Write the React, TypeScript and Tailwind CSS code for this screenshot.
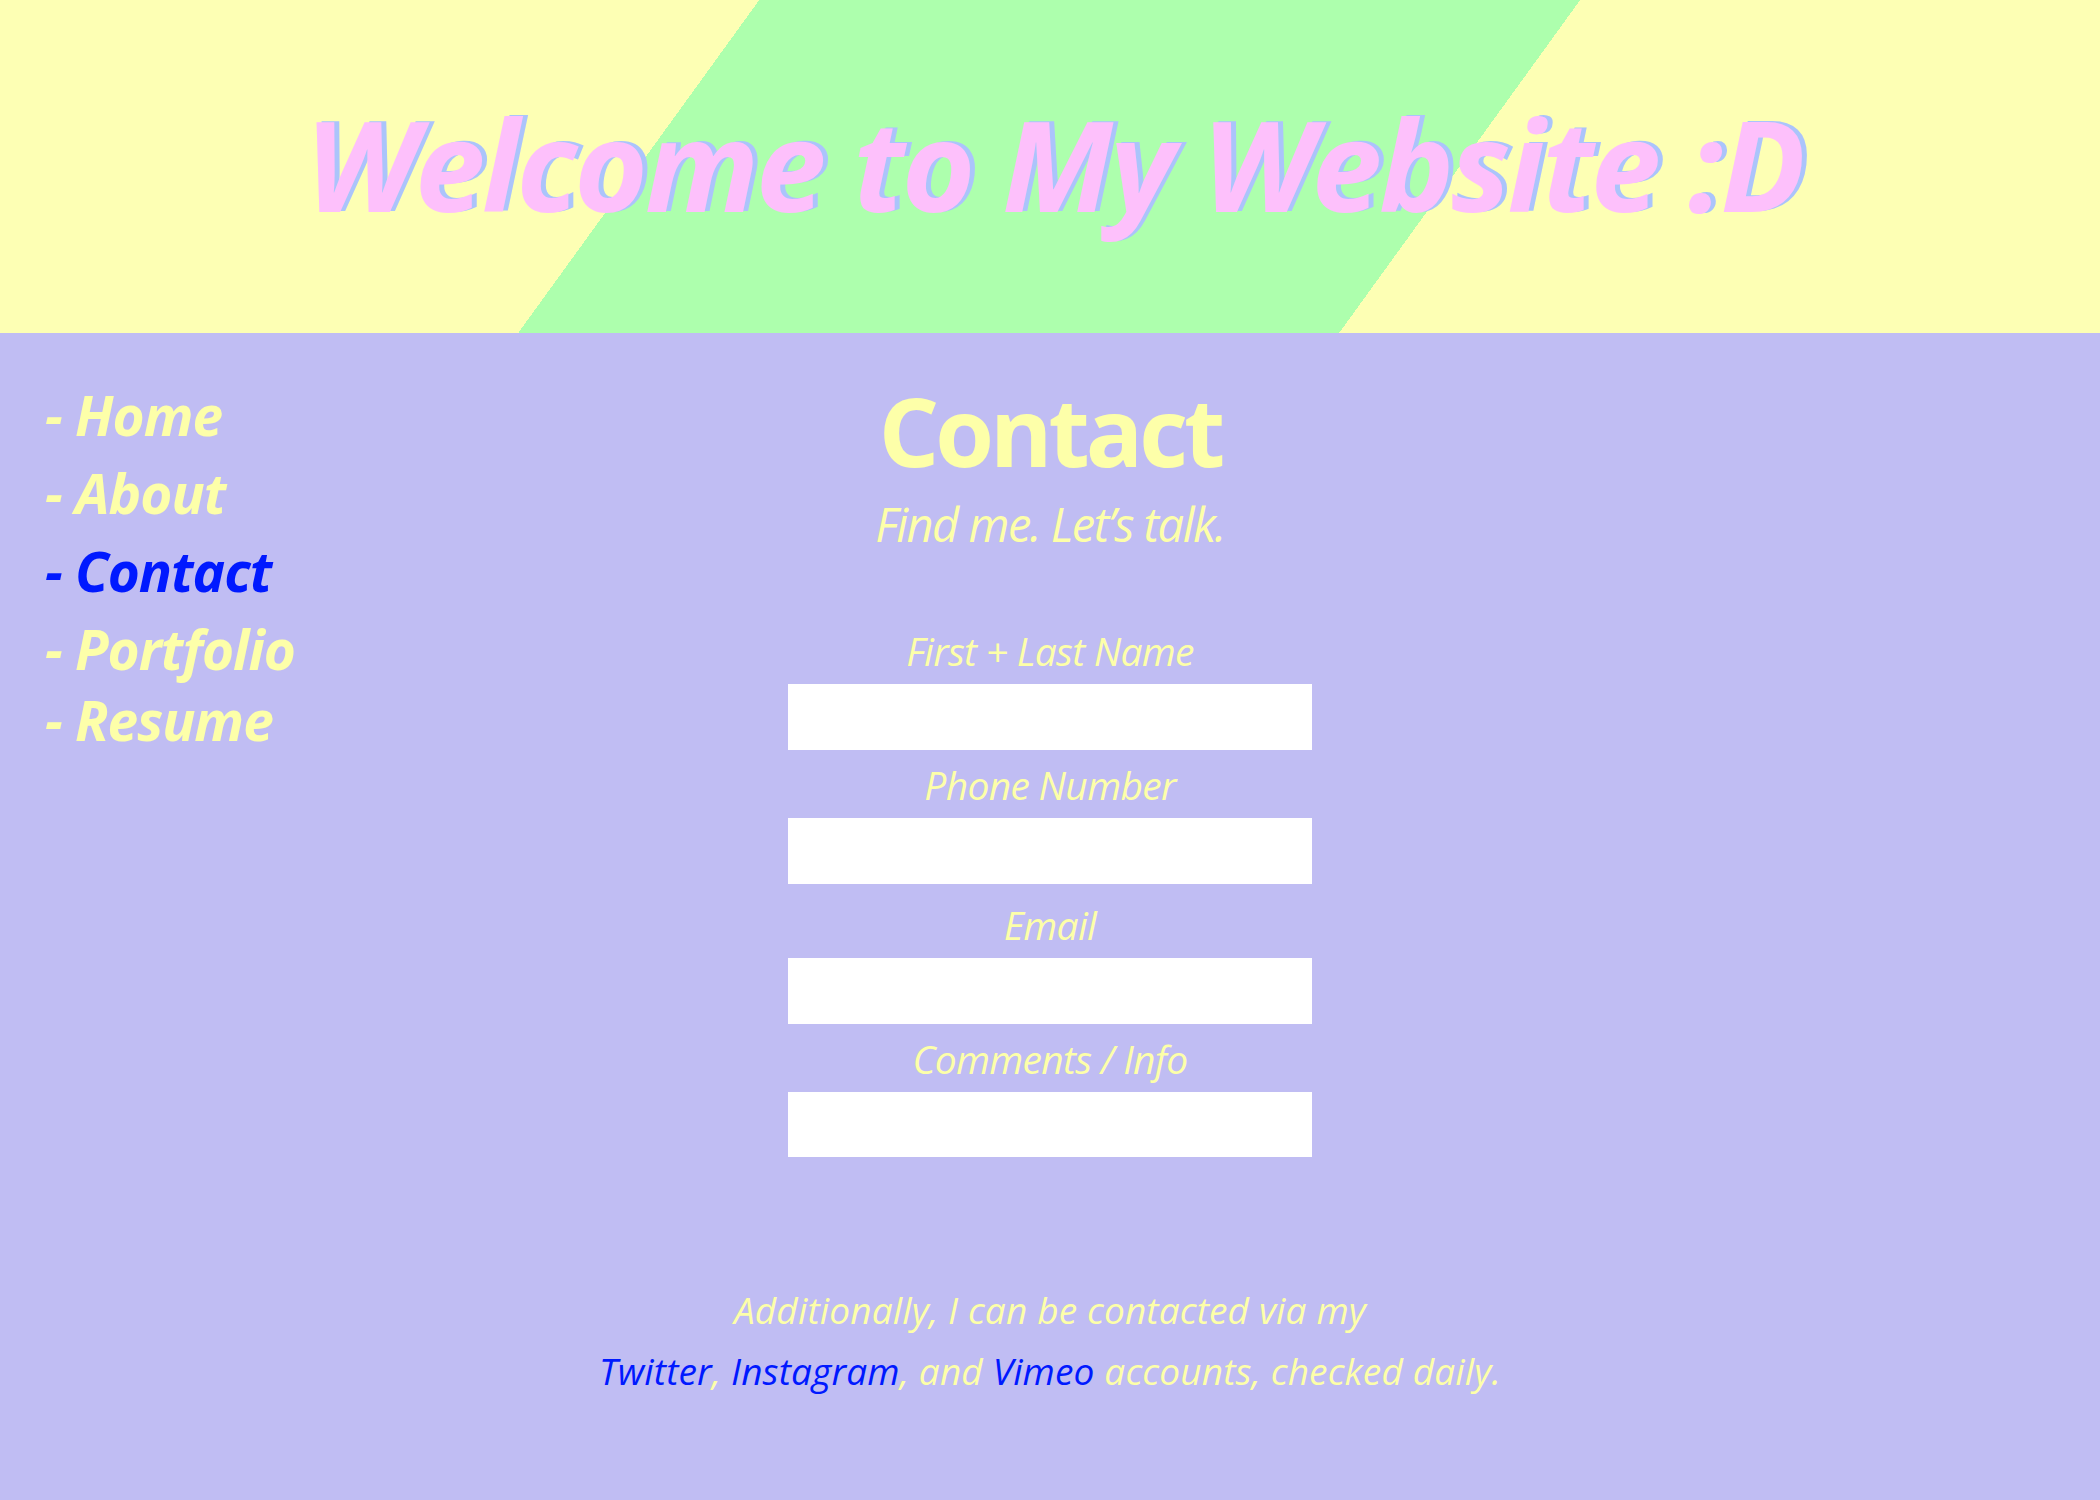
import React from "react";

const navLinks = [
  { label: "Home", active: false },
  { label: "About", active: false },
  { label: "Contact", active: true },
  { label: "Portfolio", active: false },
  { label: "Resume", active: false },
];

const fields = [
  { label: "First + Last Name", labelGap: "mt-[83px]", boxH: "h-[66px]" },
  { label: "Phone Number", labelGap: "mt-[15px]", boxH: "h-[66px]" },
  { label: "Email", labelGap: "mt-[21px]", boxH: "h-[66px]" },
  { label: "Comments / Info", labelGap: "mt-[15px]", boxH: "h-[65px]" },
];

export default function App() {
  return (
    <div className="w-[2100px] h-[1500px] overflow-hidden bg-[#c0bdf3] font-['Open_Sans',sans-serif]">
      {/* header with the diagonal stripe */}
      <header className="h-[333px] pt-[100px] flex justify-center bg-[linear-gradient(125.9deg,#fdffb4_615px,#adffad_615px,#adffad_1280px,#fdffb4_1280px)]">
        <h1 className="text-[126px] leading-none font-bold italic tracking-[-3px] text-[#fdc0fb] whitespace-nowrap [text-shadow:5px_-1px_0_#abc4fb] pl-[8px]">
          Welcome to My Website :D
        </h1>
      </header>

      <div className="grid grid-cols-[1fr_1000px_1fr]">
        <nav className="pt-[43px] pl-[45px]">
          <ul className="flex flex-col">
            {navLinks.map((link) => (
              <li
                key={link.label}
                className={`text-[55px] leading-[78px] font-bold italic tracking-[-1px] whitespace-nowrap ${
                  link.active ? "text-[#0019ff]" : "text-[#fdffa9]"
                } ${link.label === "Resume" ? "-mt-[7px]" : ""}`}
              >
                - {link.label}
              </li>
            ))}
          </ul>
        </nav>

        <main className="flex flex-col items-center text-[#fdffa9]">
          <h2 className="mt-[50px] text-[95px] leading-none font-bold tracking-[-4px]">Contact</h2>
          <p className="mt-[23px] text-[47px] leading-none italic tracking-[-1.5px]">
            Find me. Let&rsquo;s talk.
          </p>

          <form className="flex flex-col items-center">
            {fields.map((f) => (
              <label key={f.label} className="flex flex-col items-center">
                <span className={`${f.labelGap} text-[39px] leading-none italic tracking-[-0.7px]`}>
                  {f.label}
                </span>
                <input type="text" className={`mt-[14px] w-[524px] ${f.boxH} bg-white outline-none`} />
              </label>
            ))}
          </form>

          <p className="mt-[122px] text-[37px] leading-[61px] italic tracking-[0.15px] text-center whitespace-nowrap">
            Additionally, I can be contacted via my
            <br />
            <a href="#" className="text-[#0019ff]">Twitter</a>,{" "}
            <a href="#" className="text-[#0019ff]">Instagram</a>, and{" "}
            <a href="#" className="text-[#0019ff]">Vimeo</a> accounts, checked daily.
          </p>
        </main>

        <div />
      </div>
    </div>
  );
}
